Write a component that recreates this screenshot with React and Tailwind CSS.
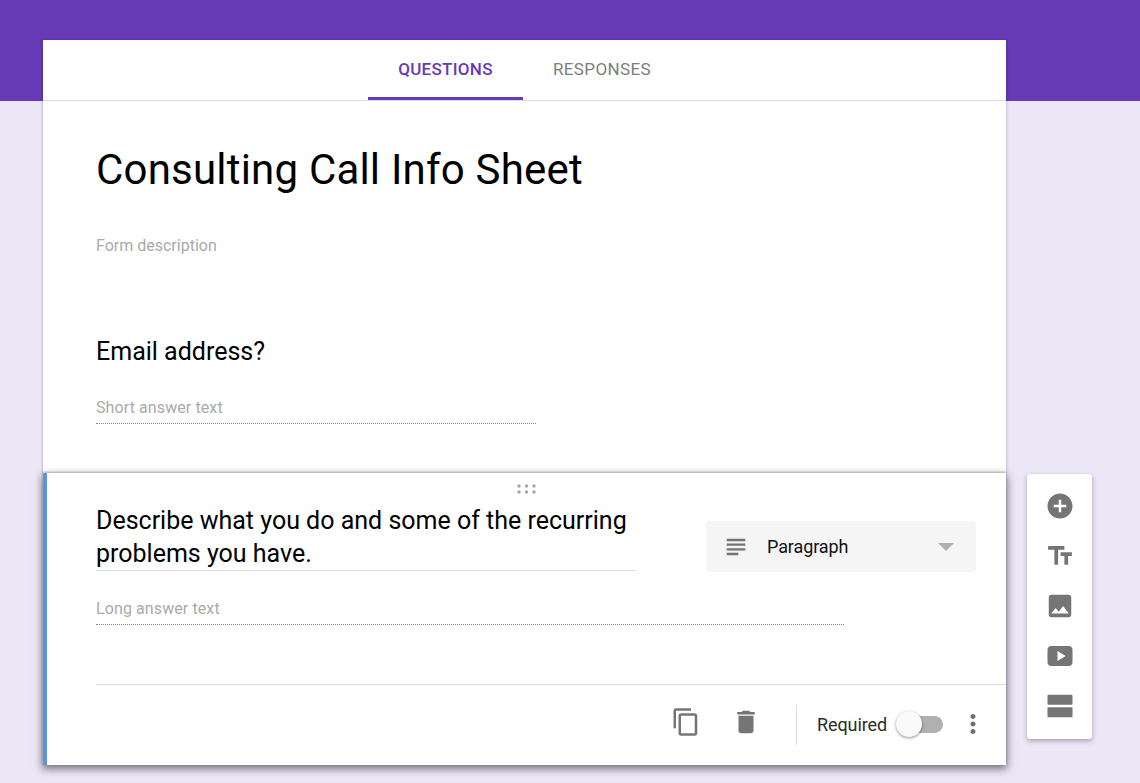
import React from "react";

const Icon = ({ d, className }) => (
  <svg viewBox="0 0 24 24" className={className} fill="currentColor">
    <path d={d} />
  </svg>
);

const icons = {
  add: "M12 2C6.48 2 2 6.48 2 12s4.48 10 10 10 10-4.48 10-10S17.52 2 12 2zm5 11h-4v4h-2v-4H7v-2h4V7h2v4h4v2z",
  title: "M2.5 4v3h5v12h3V7h5V4h-13zm19 5h-9v3h3v7h3v-7h3V9z",
  image: "M21 19V5c0-1.1-.9-2-2-2H5c-1.1 0-2 .9-2 2v14c0 1.1.9 2 2 2h14c1.1 0 2-.9 2-2zM8.5 13.5l2.5 3.01L14.5 12l4.5 6H5l3.5-4.5z",
  video: "M19 4H5C3.3 4 2 5.300 2 7v10c0 1.700 1.300 3 3 3h14c1.700 0 3-1.300 3-3V7c0-1.700-1.300-3-3-3zM10 16V8l6.500 4-6.500 4z",
  section: "M2.8 3h18.4c.44 0 .8.36.8.8v6.4c0 .44-.36.8-.8.8H2.8c-.44 0-.8-.36-.8-.8V3.800c0-.44.36-.8.8-.8zm0 10h18.400c.44 0 .8.36.8.8v6.400c0 .44-.36.8-.8.8H2.800c-.44 0-.8-.36-.8-.8v-6.400c0-.44.36-.8.8-.8z",
  copy: "M16 1H4c-1.1 0-2 .9-2 2v14h2V3h12V1zm3 4H8c-1.1 0-2 .9-2 2v14c0 1.1.9 2 2 2h11c1.1 0 2-.9 2-2V7c0-1.1-.9-2-2-2zm0 16H8V7h11v14z",
  trash: "M6 19c0 1.1.9 2 2 2h8c1.1 0 2-.9 2-2V7H6v12zM19 4h-3.5l-1-1h-5l-1 1H5v2h14V4z",
  lines: "M14 17H4v2h10v-2zm6-8H4v2h16V9zM4 15h16v-2H4v2zM4 5v2h16V5H4z",
  more: "M12 8c1.100 0 2-.9 2-2s-.9-2-2-2-2 .9-2 2 .9 2 2 2zm0 2c-1.100 0-2 .9-2 2s.9 2 2 2 2-.9 2-2-.9-2-2-2zm0 6c-1.100 0-2 .9-2 2s.9 2 2 2 2-.9 2-2-.9-2-2-2z",
};

const toolbarIcons = ["add", "title", "image", "video", "section"];

export default function App() {
  return (
    <div className="h-[783px] overflow-hidden bg-[#ece7f6] font-['Roboto',sans-serif]">
      <div className="h-[101px] bg-[#6739b6]"></div>

      <div className="mt-[-61px] flex items-start pl-[43px]">
        <div className="w-[963px]">
          {/* tabs + form header */}
          <div className="h-[433px] bg-white shadow-[0_1px_3px_rgba(0,0,0,0.3)]">
            <div className="flex h-[61px] justify-center border-b border-[#dadce0]">
              <div className="flex h-[60px] w-[155px] items-center justify-center border-b-[3px] border-[#673ab7] pt-[3px] text-[17px] font-medium tracking-[0.3px] text-[#673ab7]">
                QUESTIONS
              </div>
              <div className="flex h-[60px] w-[158px] items-center justify-center text-[17px] font-normal tracking-[0.4px] text-[#7d7d7d]">
                RESPONSES
              </div>
            </div>
            <div className="px-[53px]">
              <h1 className="mt-[41px] text-[42px] leading-[56px] tracking-[0.2px] text-black">Consulting Call Info Sheet</h1>
              <p className="mt-[38px] text-base leading-[20px] text-[#aaaaaa]">Form description</p>
              <p className="mt-[80px] text-[25px] leading-[32px] text-black">Email address?</p>
              <div className="mt-[30px] w-[440px] border-b border-dotted border-[#8a8a8a] pb-[5px] text-base leading-[20px] tracking-[0.1px] text-[#aaaaaa]">
                Short answer text
              </div>
            </div>
          </div>

          {/* active question */}
          <div className="relative h-[292px] border-l-4 border-[#5b93e6] bg-white shadow-[0_3px_8px_1px_rgba(0,0,0,0.5),0_-1px_2px_rgba(0,0,0,0.2)]">
            <div className="flex justify-center pt-[11px]">
              <svg viewBox="0 0 20 10" className="h-[10px] w-[20px] fill-[#a8a8a8]">
                <circle cx="2" cy="2" r="1.700" />
                <circle cx="9.500" cy="2" r="1.700" />
                <circle cx="17" cy="2" r="1.700" />
                <circle cx="2" cy="8" r="1.700" />
                <circle cx="9.500" cy="8" r="1.700" />
                <circle cx="17" cy="8" r="1.700" />
              </svg>
            </div>
            <div className="flex items-start pl-[49px] pr-[30px]">
              <p className="mt-[10px] h-[67px] w-[540px] border-b border-[#dadce0] text-[25px] leading-[33px] text-black">
                Describe what you do and some of the recurring problems you have.
              </p>
              <div className="mt-[27px] ml-[70px] flex h-[51px] w-[270px] items-center rounded-[4px] bg-[#f5f5f5] pl-[16px]">
                <Icon d={icons.lines} className="h-[28px] w-[28px] text-[#757575]" />
                <span className="ml-[17px] text-lg leading-[24px] tracking-[-0.1px] text-[#111111]">Paragraph</span>
                <span className="ml-auto mr-[22px] h-0 w-0 border-x-[8px] border-t-[8px] border-x-transparent border-t-[#b0b0b0]"></span>
              </div>
            </div>
            <div className="ml-[49px] mt-[27px] w-[748px] border-b border-dotted border-[#8a8a8a] pb-[5px] text-base leading-[20px] tracking-[0.1px] text-[#aaaaaa]">
              Long answer text
            </div>
            <div className="ml-[49px] mt-[59px] flex h-[80px] items-center border-t border-[#dadce0]">
              <div className="ml-auto flex items-center">
                <Icon d={icons.copy} className="mb-[6px] h-[30px] w-[30px] text-[#757575]" />
                <Icon d={icons.trash} className="mb-[6px] ml-[30px] h-[30px] w-[30px] text-[#757575]" />
                <div className="ml-[35px] h-[40px] border-l border-[#dadce0]"></div>
                <span className="ml-[20px] w-[71px] text-lg leading-[24px] tracking-[-0.1px] text-[#2b2b2b]">Required</span>
                <div className="relative ml-[15px] h-[17px] w-[40px] rounded-full bg-[#b0b0b0]">
                  <div className="absolute left-[-7px] top-[-5px] h-[26px] w-[26px] rounded-full bg-[#fafafa] shadow-[0_1px_3px_rgba(0,0,0,0.45)]"></div>
                </div>
                <Icon d={icons.more} className="ml-[15px] mb-[2px] mr-[18px] h-[30px] w-[30px] text-[#6e6e6e]" />
              </div>
            </div>
          </div>
        </div>

        {/* side toolbar */}
        <div className="ml-[21px] mt-[434px] flex h-[265px] w-[65px] flex-col items-center gap-[20px] rounded-[3px] bg-white pt-[17px] shadow-[0_2px_5px_rgba(0,0,0,0.3)]">
          {toolbarIcons.map((name) => (
            <Icon key={name} d={icons[name]} className="h-[30px] w-[30px] text-[#757575]" />
          ))}
        </div>
      </div>
    </div>
  );
}
